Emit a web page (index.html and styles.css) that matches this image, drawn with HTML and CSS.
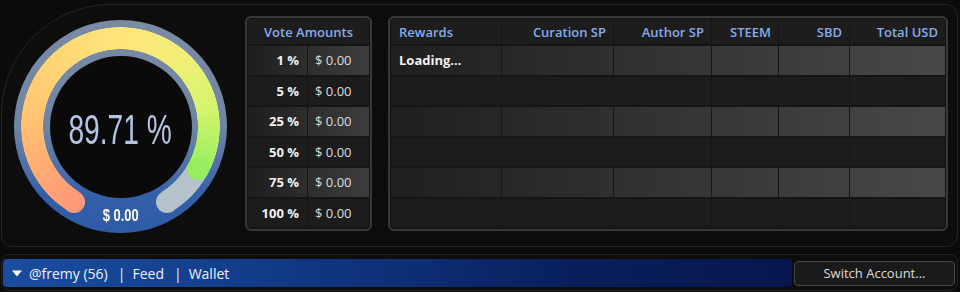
FILE: index.html
```html
<!DOCTYPE html>
<html>

<head>
    <title>Voting Power</title>
    <link rel="stylesheet" href="styles.css">
</head>

<body>
    <div class="panel">
        <div class="gauge">
            <div class="gauge-arc"></div>
            <span class="cap cap-start"></span>
            <span class="cap cap-track"></span>
            <span class="cap cap-fill"></span>
            <div class="gauge-face">
                <span class="gauge-pct">89.71 %</span>
            </div>
            <div class="gauge-usd"><span>$ 0.00</span></div>
        </div>

        <div class="vote-table">
            <div class="vt-head">Vote Amounts</div>
            <div class="vt-row odd"><span class="vt-pct">1 %</span><span class="vt-usd">$ 0.00</span></div>
            <div class="vt-row"><span class="vt-pct">5 %</span><span class="vt-usd">$ 0.00</span></div>
            <div class="vt-row odd"><span class="vt-pct">25 %</span><span class="vt-usd">$ 0.00</span></div>
            <div class="vt-row"><span class="vt-pct">50 %</span><span class="vt-usd">$ 0.00</span></div>
            <div class="vt-row odd"><span class="vt-pct">75 %</span><span class="vt-usd">$ 0.00</span></div>
            <div class="vt-row"><span class="vt-pct">100 %</span><span class="vt-usd">$ 0.00</span></div>
        </div>

        <div class="rw-table">
            <div class="rw-row rw-head">
                <span class="left">Rewards</span>
                <span>Curation SP</span>
                <span>Author SP</span>
                <span>STEEM</span>
                <span>SBD</span>
                <span>Total USD</span>
            </div>
            <div class="rw-row odd">
                <span class="left loading">Loading...</span>
                <span></span><span></span><span></span><span></span><span></span>
            </div>
            <div class="rw-row">
                <span></span><span></span><span></span><span></span><span></span><span></span>
            </div>
            <div class="rw-row odd">
                <span></span><span></span><span></span><span></span><span></span><span></span>
            </div>
            <div class="rw-row">
                <span></span><span></span><span></span><span></span><span></span><span></span>
            </div>
            <div class="rw-row odd">
                <span></span><span></span><span></span><span></span><span></span><span></span>
            </div>
            <div class="rw-row">
                <span></span><span></span><span></span><span></span><span></span><span></span>
            </div>
        </div>
    </div>

    <div class="footer">
        <div class="account-bar">
            <svg class="caret" width="10" height="7" viewBox="0 0 10 7">
                <path d="M0 0.5 L10 0.5 L5 6.5 Z" fill="#fff" />
            </svg>
            <span>@fremy (56)</span>
            <span class="sep">|</span>
            <span>Feed</span>
            <span class="sep">|</span>
            <span>Wallet</span>
        </div>
        <button class="button">Switch Account...</button>
    </div>
</body>

</html>
```

FILE: styles.css
```css
body {
    margin: 0;
    padding: 0;
    background-color: #0b0b0b;
    font-family: "Open Sans", "Liberation Sans", sans-serif;
    width: 960px;
    height: 292px;
    overflow: hidden;
}

.panel {
    display: flex;
    align-items: flex-start;
    box-sizing: border-box;
    width: 957px;
    height: 243px;
    margin: 4px 0 0 1px;
    border: 1px solid #242424;
    border-radius: 110px 12px 12px 10px;
    background-color: #0d0d0d;
}

/* gauge */

.gauge {
    position: relative;
    flex: none;
    width: 213px;
    height: 213px;
    margin: 15px 18px 0 12px;
    border-radius: 50%;
    background: linear-gradient(to bottom, #7a8ba4 0%, #7084a3 50%, #4c6fa8 70%, #3460a8 82%, #2e5ba6 100%);
}

.gauge-arc {
    position: absolute;
    inset: 0;
    border-radius: 50%;
    background: conic-gradient(from 212deg,
            #ff9a7a 0deg,
            #ffab74 30deg,
            #ffc272 60deg,
            #ffd976 110deg,
            #ffe57a 150deg,
            #f2ef78 190deg,
            #d6f46e 225deg,
            #96ee5e 267deg,
            #b6c2ca 267deg,
            #b6c2ca 296deg,
            transparent 296deg);
    -webkit-mask-image: radial-gradient(circle, transparent 77px, #000 77.6px, #000 99px, transparent 99.6px);
    mask-image: radial-gradient(circle, transparent 77px, #000 77.6px, #000 99px, transparent 99.6px);
}

.cap {
    position: absolute;
    width: 22px;
    height: 22px;
    border-radius: 50%;
}

.cap-start {
    left: 48.6px;
    top: 170.5px;
    background-color: #ff9a7a;
}

.cap-track {
    left: 142.4px;
    top: 170.5px;
    background-color: #b6c2ca;
}

.cap-fill {
    left: 172.9px;
    top: 138.4px;
    background-color: #96ee5e;
}

.gauge-face {
    position: absolute;
    inset: 35.5px;
    border-radius: 50%;
    background-color: #0a0a0a;
    display: flex;
    align-items: center;
    justify-content: center;
    padding-top: 7px;
    box-sizing: border-box;
}

.gauge-pct {
    font-family: "Liberation Sans", Arial, sans-serif;
    font-size: 42px;
    line-height: 42px;
    color: #b6c3e3;
    white-space: nowrap;
    transform: scaleX(0.67);
}

.gauge-usd {
    position: absolute;
    left: 0;
    right: 0;
    top: 186px;
    height: 20px;
    display: flex;
    justify-content: center;
    align-items: center;
}

.gauge-usd span {
    font-family: "Liberation Sans", Arial, sans-serif;
    font-weight: bold;
    font-size: 17px;
    color: #fff;
    white-space: nowrap;
    transform: scaleX(0.76);
}

/* tables */

.vote-table,
.rw-table {
    flex: none;
    display: grid;
    grid-template-rows: 25px repeat(6, 28.5px);
    row-gap: 2px;
    margin-top: 11px;
    padding: 1px 1px 2px 1px;
    border: 2px solid #383838;
    border-radius: 6px;
    background-color: #151515;
    font-size: 13px;
}

.vote-table {
    width: 127px;
    box-sizing: border-box;
    margin-right: 16px;
}

.rw-table {
    width: 560px;
    box-sizing: border-box;
}

.vt-head {
    display: flex;
    align-items: center;
    justify-content: center;
    background-color: #1d1d1d;
    color: #86abec;
    font-weight: 600;
}

.vt-row {
    display: grid;
    grid-template-columns: 59px 62px;
    background-color: #1c1c1c;
}

.vt-row.odd {
    background: linear-gradient(to right, #1e1e1e, #3d3d3d);
}

.vt-row span {
    display: flex;
    align-items: center;
}

.vt-pct {
    justify-content: flex-end;
    padding-right: 8px;
    font-weight: bold;
    color: #f2f2f2;
}

.vt-usd {
    border-left: 1px solid #151515;
    padding-left: 7px;
    color: #dedede;
}

.rw-row {
    display: grid;
    grid-template-columns: 110px 112px 98px 67px 71px 96px;
    background-color: #1c1c1c;
}

.rw-row.odd {
    background: linear-gradient(to right, #1f1f1f, #484848);
}

.rw-row span {
    display: flex;
    align-items: center;
    justify-content: flex-end;
    padding-right: 7px;
    border-left: 1px solid #161616;
}

.rw-row span:first-child {
    border-left: none;
}

.rw-row .left {
    justify-content: flex-start;
    padding-left: 8px;
}

.rw-head {
    background-color: #1d1d1d;
    color: #86abec;
    font-weight: 600;
}

.loading {
    color: #f2f2f2;
    font-weight: bold;
}

/* footer */

.footer {
    display: flex;
    align-items: center;
    gap: 2px;
    box-sizing: border-box;
    width: 957px;
    margin: 7px 0 0 1px;
    padding: 4px 2px 3px 1px;
    border: 1px solid #222;
    border-radius: 8px;
    background-color: #0d0d0d;
}

.account-bar {
    flex: 1;
    display: flex;
    align-items: center;
    height: 28px;
    padding-left: 9px;
    border-radius: 4px;
    background: linear-gradient(to right, #1b4c9e 0%, #14408f 25%, #0e2f76 50%, #091f5c 72%, #06174e 100%);
    color: #eef2fc;
    font-size: 14px;
    font-weight: 500;
}

.caret {
    margin-right: 7px;
}

.sep {
    margin: 0 7px 0 10px;
}

.button {
    flex: none;
    width: 161px;
    height: 25px;
    background-color: #1a1a1a;
    border: 1px solid #474747;
    border-radius: 4px;
    color: #dcdcdc;
    font-family: "Open Sans", "Liberation Sans", sans-serif;
    font-size: 13px;
    padding: 0;
    cursor: pointer;
}
```
